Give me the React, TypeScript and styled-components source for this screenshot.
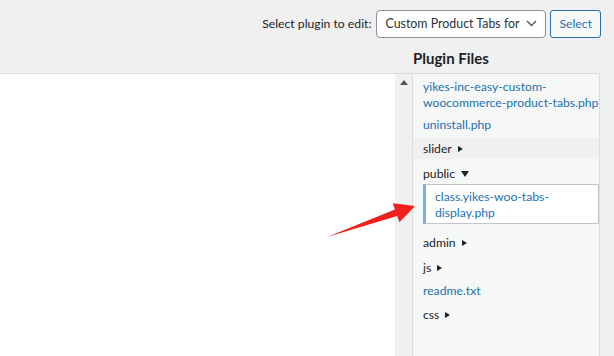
import styled, { createGlobalStyle } from 'styled-components';

const GlobalStyle = createGlobalStyle`
  html, body {
    margin: 0;
    padding: 0;
    background: #f0f0f1;
  }
  * {
    box-sizing: border-box;
  }
`;

const Page = styled.div`
  position: relative;
  width: 614px;
  height: 356px;
  overflow: hidden;
  display: grid;
  grid-template-rows: 47px 26px 1fr;
  background: #f0f0f1;
  color: #1d2327;
  font-family: Lato, "Noto Sans", sans-serif;
  font-size: 12.2px;
`;

const TopBar = styled.div`
  display: flex;
  align-items: center;
  justify-content: flex-end;
  padding-right: 13px;
`;

const Label = styled.label`
  color: #1d2327;
  margin-right: 5px;
`;

const FakeSelect = styled.div`
  width: 170px;
  height: 28px;
  display: flex;
  align-items: center;
  padding: 0 8px 0 8px;
  gap: 6px;
  background: #fff;
  border: 1px solid #8c8f94;
  border-radius: 4px;
  font-size: 12.4px;
  color: #2c3338;
  span {
    flex: 1;
    white-space: nowrap;
    overflow: hidden;
  }
`;

const Button = styled.button`
  margin-left: 4px;
  height: 28px;
  padding: 0 8px;
  background: #f6f7f7;
  border: 1px solid #2271b1;
  border-radius: 3px;
  color: #2271b1;
  font-family: inherit;
  font-size: 12.2px;
`;

const HeadingRow = styled.div`
  display: grid;
  grid-template-columns: 1fr 202px;
`;

const Heading = styled.h2`
  grid-column: 2;
  margin: 1px 0 0;
  padding-left: 1px;
  font-size: 15px;
  font-weight: 700;
  line-height: 20px;
  color: #1d2327;
`;

const Main = styled.div`
  display: grid;
  grid-template-columns: 395px 17px 188px;
  padding-right: 14px;
  min-height: 0;
`;

const Editor = styled.div`
  background: #fff;
  border-top: 1px solid #dcdcde;
`;

const ScrollCol = styled.div`
  background: #f0f0f1;
  border-top: 1px solid #dcdcde;
  display: flex;
  justify-content: center;
  align-items: flex-start;
  padding-top: 6px;
`;

const UpArrow = styled.span`
  width: 0;
  height: 0;
  border-left: 4.5px solid transparent;
  border-right: 4.5px solid transparent;
  border-bottom: 5px solid #50575e;
`;

const Panel = styled.div`
  min-width: 0;
  overflow: hidden;
  background: #f6f7f7;
  border: 1px solid #dcdcde;
  border-bottom: none;
`;

const Tree = styled.ul`
  list-style: none;
  margin: 0;
  padding: 4px 0 0;
  display: flex;
  flex-direction: column;
  gap: 4px;
`;

const FileRow = styled.li`
  padding: 1px 0 1px 10px;
  line-height: 16px;
  color: #2271b1;
`;

const FolderRow = styled.li<{ $hover?: boolean }>`
  padding: 3px 10px 2px;
  line-height: 16px;
  color: #1d2327;
  background: ${(p) => (p.$hover ? '#f0f0f1' : 'transparent')};
`;

const Caret = styled.span<{ $open?: boolean }>`
  display: inline-block;
  margin-left: 6px;
  vertical-align: 1px;
  width: 0;
  height: 0;
  ${(p) =>
    p.$open
      ? `border-left: 4px solid transparent;
         border-right: 4px solid transparent;
         border-top: 6px solid #1d2327;`
      : `border-top: 3.5px solid transparent;
         border-bottom: 3.5px solid transparent;
         border-left: 5px solid #1d2327;`}
`;

const OpenFolder = styled.li`
  display: flex;
  flex-direction: column;
  margin-bottom: 4px;
`;

const SubList = styled.ul`
  list-style: none;
  margin: 0 0 0 10px;
  padding: 0;
`;

const Selected = styled.li`
  padding: 4px 4px 2px 9px;
  line-height: 16px;
  background: #fff;
  border: 1px solid #c3c4c7;
  border-left: 3px solid #72aee6;
  color: #2271b1;
`;

const Overlay = styled.svg`
  position: absolute;
  left: 0;
  top: 0;
  pointer-events: none;
`;

const App = () => {
  return (
    <Page>
      <GlobalStyle />
      <TopBar>
        <Label>Select plugin to edit:</Label>
        <FakeSelect>
          <span>Custom Product Tabs for</span>
          <svg width="11" height="7" viewBox="0 0 11 7">
            <path d="M1 1l4.5 4.5L10 1" fill="none" stroke="#50575e" strokeWidth="1.4" />
          </svg>
        </FakeSelect>
        <Button type="button">Select</Button>
      </TopBar>
      <HeadingRow>
        <Heading>Plugin Files</Heading>
      </HeadingRow>
      <Main>
        <Editor />
        <ScrollCol>
          <UpArrow />
        </ScrollCol>
        <Panel>
          <Tree>
            <FileRow>
              yikes-inc-easy-custom-
              <br />
              woocommerce-product-tabs.php
            </FileRow>
            <FileRow>uninstall.php</FileRow>
            <FolderRow $hover>
              slider<Caret />
            </FolderRow>
            <OpenFolder>
              <FolderRow>
                public<Caret $open />
              </FolderRow>
              <SubList>
                <Selected>class.yikes-woo-tabs-display.php</Selected>
              </SubList>
            </OpenFolder>
            <FolderRow>
              admin<Caret />
            </FolderRow>
            <FolderRow>
              js<Caret />
            </FolderRow>
            <FileRow>readme.txt</FileRow>
            <FolderRow>
              css<Caret />
            </FolderRow>
          </Tree>
        </Panel>
      </Main>
      <Overlay width="614" height="356" viewBox="0 0 614 356">
        <polygon
          points="327,237 394.9,209.4 392.8,203.2 415,206 399.4,222.2 397.3,216"
          fill="#f0201c"
        />
      </Overlay>
    </Page>
  );
};

export default App;
